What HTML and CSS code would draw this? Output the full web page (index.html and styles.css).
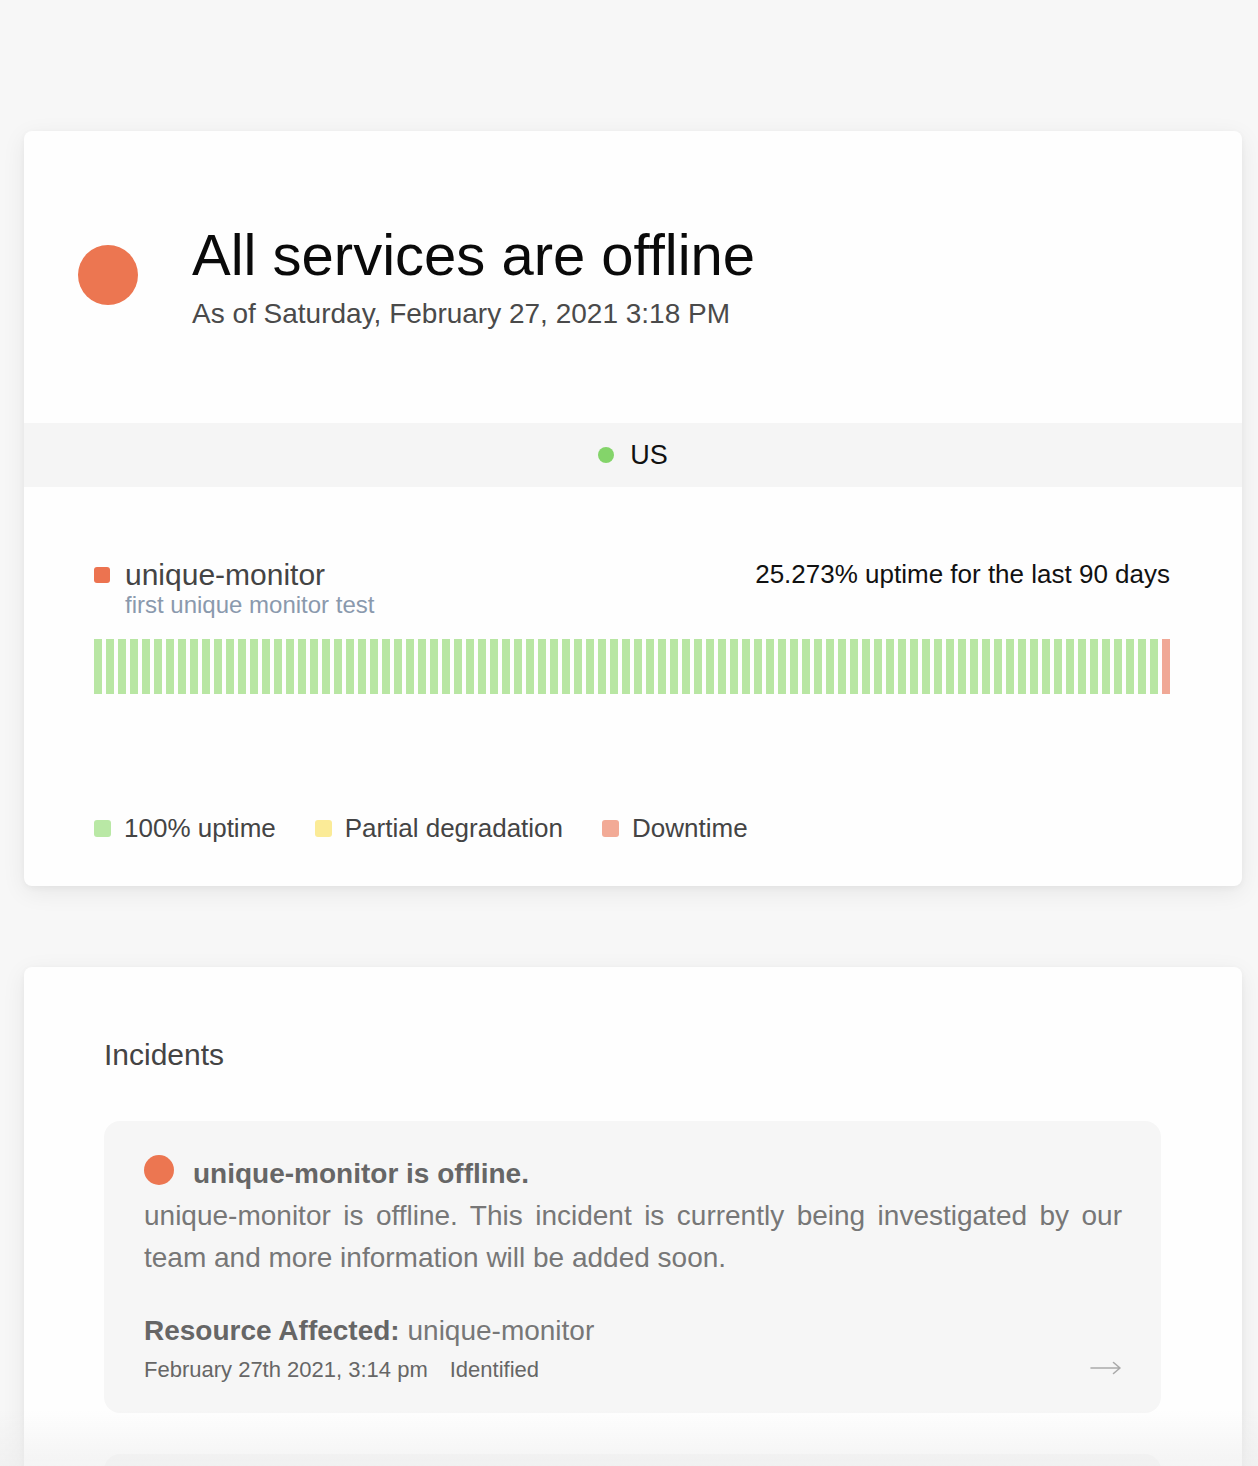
FILE: index.html
```html
<!DOCTYPE html>
<html lang="en">
<head>
<meta charset="utf-8">
<title>Status</title>
<link rel="stylesheet" href="styles.css">
</head>
<body>
<main class="page">
  <section class="card status-card">
    <div class="hero">
      <span class="hero-dot"></span>
      <div class="hero-text">
        <h1 class="hero-title">All services are offline</h1>
        <p class="hero-sub">As of Saturday, February 27, 2021 3:18 PM</p>
      </div>
    </div>
    <div class="region">
      <span class="region-dot"></span>
      <span class="region-name">US</span>
    </div>
    <div class="monitor">
      <div class="monitor-head">
        <div class="monitor-info">
          <div class="monitor-name"><span class="monitor-mark"></span>unique-monitor</div>
          <div class="monitor-desc">first unique monitor test</div>
        </div>
        <div class="monitor-uptime">25.273% uptime for the last 90 days</div>
      </div>
      <div class="bars">
        <span class="bar"></span><span class="bar"></span><span class="bar"></span><span class="bar"></span><span class="bar"></span><span class="bar"></span><span class="bar"></span><span class="bar"></span><span class="bar"></span><span class="bar"></span>
        <span class="bar"></span><span class="bar"></span><span class="bar"></span><span class="bar"></span><span class="bar"></span><span class="bar"></span><span class="bar"></span><span class="bar"></span><span class="bar"></span><span class="bar"></span>
        <span class="bar"></span><span class="bar"></span><span class="bar"></span><span class="bar"></span><span class="bar"></span><span class="bar"></span><span class="bar"></span><span class="bar"></span><span class="bar"></span><span class="bar"></span>
        <span class="bar"></span><span class="bar"></span><span class="bar"></span><span class="bar"></span><span class="bar"></span><span class="bar"></span><span class="bar"></span><span class="bar"></span><span class="bar"></span><span class="bar"></span>
        <span class="bar"></span><span class="bar"></span><span class="bar"></span><span class="bar"></span><span class="bar"></span><span class="bar"></span><span class="bar"></span><span class="bar"></span><span class="bar"></span><span class="bar"></span>
        <span class="bar"></span><span class="bar"></span><span class="bar"></span><span class="bar"></span><span class="bar"></span><span class="bar"></span><span class="bar"></span><span class="bar"></span><span class="bar"></span><span class="bar"></span>
        <span class="bar"></span><span class="bar"></span><span class="bar"></span><span class="bar"></span><span class="bar"></span><span class="bar"></span><span class="bar"></span><span class="bar"></span><span class="bar"></span><span class="bar"></span>
        <span class="bar"></span><span class="bar"></span><span class="bar"></span><span class="bar"></span><span class="bar"></span><span class="bar"></span><span class="bar"></span><span class="bar"></span><span class="bar"></span><span class="bar"></span>
        <span class="bar"></span><span class="bar"></span><span class="bar"></span><span class="bar"></span><span class="bar"></span><span class="bar"></span><span class="bar"></span><span class="bar"></span><span class="bar"></span><span class="bar bar-down"></span>
      </div>
      <ul class="legend">
        <li class="legend-item"><span class="legend-swatch swatch-up"></span>100% uptime</li>
        <li class="legend-item"><span class="legend-swatch swatch-partial"></span>Partial degradation</li>
        <li class="legend-item"><span class="legend-swatch swatch-down"></span>Downtime</li>
      </ul>
    </div>
  </section>

  <section class="card incidents-card">
    <h2 class="incidents-title">Incidents</h2>
    <article class="incident">
      <div class="incident-head">
        <span class="incident-dot"></span>
        <h3 class="incident-title">unique-monitor is offline.</h3>
      </div>
      <p class="incident-body">unique-monitor is offline. This incident is currently being investigated by our team and more information will be added soon.</p>
      <p class="incident-resource"><strong>Resource Affected:</strong> unique-monitor</p>
      <div class="incident-foot">
        <span class="incident-meta">February 27th 2021, 3:14 pm<span class="incident-state">Identified</span></span>
        <svg class="incident-arrow" width="32" height="14" viewBox="0 0 32 14" aria-hidden="true">
          <path d="M1 7H30M23.5 1.5L30 7L23.5 12.5" fill="none" stroke="#aaaaaa" stroke-width="1.6" stroke-linecap="round" stroke-linejoin="round"/>
        </svg>
      </div>
    </article>
    <article class="incident incident-next"></article>
  </section>
</main>
<div class="bottom-fade"></div>
</body>
</html>
```
FILE: styles.css
```css
* { box-sizing: border-box; }

html, body {
  margin: 0;
  padding: 0;
  background: #f7f7f7;
}

body {
  font-family: "Liberation Sans", Arial, Helvetica, sans-serif;
  color: #444;
}

.page {
  padding: 131px 16px 0 24px;
  display: flex;
  flex-direction: column;
  gap: 81px;
}

.card {
  background: #fefefe;
  border-radius: 8px;
  box-shadow: 0 6px 24px rgba(0, 0, 0, 0.07), 0 2px 6px rgba(0, 0, 0, 0.04);
}

/* hero */
.hero {
  display: flex;
  align-items: center;
  gap: 54px;
  padding: 92px 54px 92px;
}

.hero-dot {
  width: 60px;
  height: 60px;
  border-radius: 50%;
  background: #ec7651;
  flex: none;
  margin-bottom: 5px;
}

.hero-title {
  margin: 0;
  font-size: 58px;
  line-height: 64px;
  font-weight: 400;
  color: #0a0a0a;
}

.hero-sub {
  margin: 10px 0 0;
  font-size: 28px;
  line-height: 34px;
  color: #4a4a4a;
}

/* region band */
.region {
  height: 64px;
  background: #f5f5f5;
  display: flex;
  align-items: center;
  justify-content: center;
  gap: 16px;
}

.region-dot {
  width: 16px;
  height: 16px;
  border-radius: 50%;
  background: #84d46a;
}

.region-name {
  font-size: 27px;
  color: #111;
}

/* monitor */
.monitor {
  padding: 71px 72px 43px 70px;
}

.monitor-head {
  display: flex;
  align-items: baseline;
  justify-content: space-between;
}

.monitor-name {
  display: flex;
  align-items: center;
  gap: 15px;
  font-size: 30px;
  line-height: 34px;
  color: #444;
}

.monitor-mark {
  width: 16px;
  height: 16px;
  border-radius: 3px;
  background: #ec7350;
  flex: none;
}

.monitor-desc {
  margin-top: -1px;
  padding-left: 31px;
  font-size: 24px;
  line-height: 28px;
  color: #8a99ad;
}

.monitor-uptime {
  font-size: 26px;
  line-height: 30px;
  color: #111;
}

.bars {
  display: flex;
  gap: 4px;
  height: 55px;
  margin-top: 20px;
}

.bar {
  flex: 1 1 0;
  background: #b8e6a3;
}

.bar-down {
  background: #f0a896;
}

.legend {
  list-style: none;
  margin: 119px 0 0;
  padding: 0;
  display: flex;
  gap: 39px;
}

.legend-item {
  display: flex;
  align-items: center;
  gap: 13px;
  font-size: 26px;
  line-height: 30px;
  color: #444;
}

.legend-swatch {
  width: 17px;
  height: 17px;
  border-radius: 3px;
  flex: none;
}

.swatch-up { background: #b9e8a5; }
.swatch-partial { background: #fbeb97; }
.swatch-down { background: #f2aa96; }

/* incidents */
.incidents-card {
  padding: 70px 81px 0 80px;
  border-bottom-left-radius: 0;
  border-bottom-right-radius: 0;
  min-height: 520px;
}

.incidents-title {
  margin: 0;
  font-size: 30px;
  line-height: 36px;
  font-weight: 400;
  color: #444;
}

.incident {
  margin-top: 48px;
  background: #f6f6f6;
  border-radius: 16px;
  padding: 34px 39px 30px 40px;
}

.incident-head {
  display: flex;
  align-items: center;
  gap: 19px;
}

.incident-dot {
  width: 30px;
  height: 30px;
  border-radius: 50%;
  background: #ec7651;
  flex: none;
  margin-bottom: 8px;
}

.incident-title {
  margin: 0;
  font-size: 28px;
  line-height: 32px;
  font-weight: 700;
  color: #666;
}

.incident-body {
  margin: 2px 0 0;
  font-size: 28px;
  line-height: 42px;
  text-align: justify;
  color: #777;
}

.incident-resource {
  margin: 36px 0 0;
  font-size: 28px;
  line-height: 32px;
  color: #777;
}

.incident-resource strong {
  color: #666;
}

.incident-foot {
  margin-top: 10px;
  display: flex;
  align-items: center;
  justify-content: space-between;
}

.incident-meta {
  font-size: 22px;
  line-height: 26px;
  color: #666;
}

.incident-state {
  margin-left: 22px;
}

.incident-arrow {
  display: block;
  margin-top: -4px;
}

.incident-next {
  margin-top: 41px;
  min-height: 120px;
  padding: 0;
}

.bottom-fade {
  position: fixed;
  left: 0;
  right: 0;
  bottom: 0;
  height: 56px;
  background: linear-gradient(to bottom, rgba(240, 240, 240, 0), rgba(236, 236, 236, 0.55));
  pointer-events: none;
}
```
